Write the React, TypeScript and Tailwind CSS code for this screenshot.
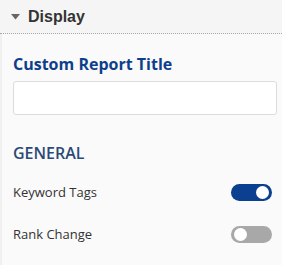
import { useState } from 'react';

function Toggle({ on, onClick }: { on: boolean; onClick: () => void }) {
  return (
    <button
      onClick={onClick}
      className={`relative w-[41px] h-[17px] rounded-full ${on ? 'bg-[#0b3f8f]' : 'bg-[#a8a8a8]'}`}
    >
      <span
        className={`absolute top-[2px] w-[13px] h-[13px] rounded-full bg-white ${on ? 'right-[3px]' : 'left-[3px]'}`}
      />
    </button>
  );
}

export default function App() {
  const [tags, setTags] = useState(true);
  const [rank, setRank] = useState(false);
  const [title, setTitle] = useState('');

  return (
    <div className="w-[282px] h-[265px] bg-[#fafafa] font-['Open_Sans',sans-serif] overflow-hidden">
      {/* Header */}
      <div className="h-[34px] bg-[#f5f5f5] border-b border-dotted border-[#a9a9a9] flex items-center pl-[11px] gap-[8px]">
        <svg width="9" height="6" viewBox="0 0 9 6">
          <path d="M0 0 L9 0 L4.5 5.5 Z" fill="#666" />
        </svg>
        <span className="font-['Liberation_Sans',sans-serif] font-bold text-[16px] text-[#333] leading-none">
          Display
        </span>
      </div>

      {/* Body */}
      <div className="border-l-2 border-[#f0f0f0] pl-[11px] pr-[5px] pt-[19px] h-full">
        <h2 className="text-[16px] font-bold text-[#0d3f8c] leading-[22px]">Custom Report Title</h2>
        <input
          value={title}
          onChange={(e) => setTitle(e.target.value)}
          className="mt-[6px] w-[264px] h-[34px] bg-white border border-[#dcdcdc] rounded-[3px] px-2 text-[13px] outline-none"
        />

        <h3 className="mt-[27px] text-[16px] font-semibold text-[#2b4a78] leading-[22px]">GENERAL</h3>

        <div className="mt-[19px] flex items-center justify-between pr-[5px]">
          <span className="text-[13px] text-[#333]">Keyword Tags</span>
          <Toggle on={tags} onClick={() => setTags(!tags)} />
        </div>
        <div className="mt-[22px] flex items-center justify-between pr-[5px]">
          <span className="text-[13px] text-[#333]">Rank Change</span>
          <Toggle on={rank} onClick={() => setRank(!rank)} />
        </div>
      </div>
    </div>
  );
}
